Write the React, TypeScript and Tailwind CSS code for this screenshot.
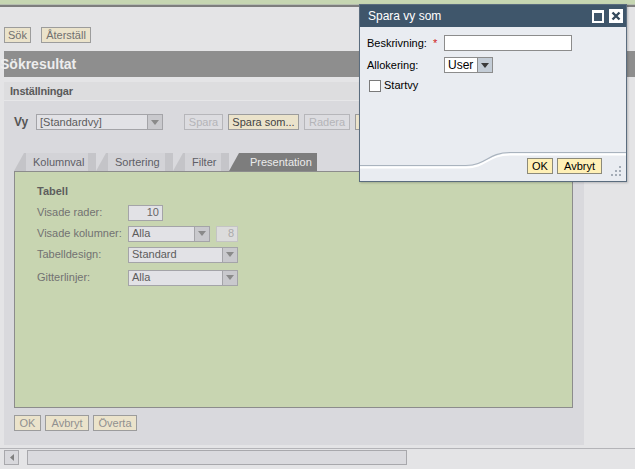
import React from "react";

type BtnProps = { label: string; w: number; kind?: "on" | "off" | "dlg"; className?: string };

const Btn = ({ label, w, kind = "on", className = "" }: BtnProps) => {
  const look =
    kind === "off"
      ? "border-[#b6b6ba] text-[#b4b4b8] bg-[#dcdce0]"
      : kind === "dlg"
      ? "border-[#8c8a7a] text-black bg-[#fff0b6]"
      : "border-[#9c9c9c] text-[#707070] bg-[#ebe3cb]";
  return (
    <div
      style={{ width: w }}
      className={`flex h-[16px] shrink-0 items-center justify-center border ${look} ${className}`}
    >
      {label}
    </div>
  );
};

const Arrow = ({ color = "#8a8a8a" }: { color?: string }) => (
  <svg width="8" height="5" viewBox="0 0 8 5">
    <polygon points="0,0 8,0 4,5" fill={color} />
  </svg>
);

const Select = ({ text, w }: { text: string; w: number }) => (
  <div style={{ width: w }} className="flex h-[16px] border border-[#a4a4a8] bg-[#e2e2e6]">
    <div className="flex flex-1 items-center pl-[3px] text-[#5c5c5c]">{text}</div>
    <div className="flex w-[15px] items-center justify-center border-l border-[#a4a4a8] bg-[#c9c9cd]">
      <Arrow />
    </div>
  </div>
);

const Tab = ({ label, w, active }: { label: string; w: number; active?: boolean }) => (
  <div className="flex h-[18px]">
    <svg width="12" height="18" viewBox="0 0 12 18" className="shrink-0">
      <polygon points="0,18 10,0 12,0 12,18" fill={active ? "#7d7d7d" : "#c4c4c8"} />
    </svg>
    <div
      style={{ width: w }}
      className={`flex items-center ${active ? "bg-[#7d7d7d] pl-[9px] text-[#ececec]" : "bg-[#d3d3d7] pl-[7px] text-[#5e5e66]"}`}
    >
      {label}
    </div>
    {!active && <div className="w-[8px] bg-[#c5c5c9]" />}
  </div>
);

const Row = ({ label, children, mt }: { label: string; children: React.ReactNode; mt: string }) => (
  <div className={`flex h-[16px] items-center ${mt}`}>
    <div className="w-[91px] text-[#727272]">{label}</div>
    {children}
  </div>
);

export default function App() {
  return (
    <div className="relative h-[469px] w-[635px] overflow-hidden bg-[#e4e4e6] font-['Liberation_Sans',Arial,sans-serif] text-[11px]">
      <div className="h-[4px] bg-[#c6d6b2]" />
      <div className="h-[1px] bg-[#b6beb0]" />
      <div className="h-[2px] bg-[#7e7e7e]" />

      {/* search buttons */}
      <div className="flex gap-[10px] pl-[4px] pt-[20px]">
        <Btn label="Sök" w={27} />
        <Btn label="Återställ" w={50} />
      </div>

      <div className="ml-[4px] mt-[8px] flex h-[26px] items-center bg-[#8e8e8e]">
        <span className="-ml-[4px] text-[14px] font-bold text-[#ededed]">Sökresultat</span>
      </div>

      {/* settings panel */}
      <div className="ml-[4px] mt-[5px] flex h-[363px] w-[580px] flex-col bg-[#d9d9dd]">
        <div className="flex h-[19px] items-center border-b border-[#e6e6e8] bg-[#dddddf] pl-[6px] text-[11px] font-bold tracking-[-0.2px] text-[#5a5a5a]">
          Inställningar
        </div>
        <div className="px-[10px]">
          <div className="mt-[13px] flex h-[16px] items-center">
            <div className="w-[22px] text-[12px] font-bold text-[#555]">Vy</div>
            <Select text="[Standardvy]" w={127} />
            <div className="ml-[21px] flex gap-[5px]">
              <Btn label="Spara" w={39} kind="off" />
              <Btn label="Spara som..." w={71} className="!text-[#444]" />
              <Btn label="Radera" w={46} kind="off" />
              <Btn label="Standard" w={60} />
            </div>
          </div>

          <div className="mt-[23px] flex">
            <Tab label="Kolumnval" w={62} />
            <Tab label="Sortering" w={57} />
            <Tab label="Filter" w={36} />
            <Tab label="Presentation" w={76} active />
          </div>

          <div className="h-[237px] w-[559px] border border-[#8c8c8c] bg-[#c8d5b1] pl-[22px] pt-[11px]">
            <div className="text-[11px] font-bold text-[#5e5e5e]">Tabell</div>
            <Row label="Visade rader:" mt="mt-[5px]">
              <div className="flex h-[16px] w-[35px] items-center justify-end border border-[#a4a4a8] bg-[#e2e2e6] pr-[3px] text-[#666]">
                10
              </div>
            </Row>
            <Row label="Visade kolumner:" mt="mt-[5px]">
              <Select text="Alla" w={82} />
              <div className="ml-[6px] flex h-[16px] w-[22px] items-center justify-end border border-[#c4c4c4] bg-[#dcdcdc] pr-[3px] text-[#aaa]">
                8
              </div>
            </Row>
            <Row label="Tabelldesign:" mt="mt-[5px]">
              <Select text="Standard" w={110} />
            </Row>
            <Row label="Gitterlinjer:" mt="mt-[7px]">
              <Select text="Alla" w={110} />
            </Row>
          </div>

          <div className="mt-[7px] flex gap-[4px]">
            <Btn label="OK" w={27} className="!text-[#909090]" />
            <Btn label="Avbryt" w={44} className="!text-[#909090]" />
            <Btn label="Överta" w={44} className="!text-[#909090]" />
          </div>
        </div>
      </div>

      {/* horizontal scrollbar */}
      <div className="mt-[3px] flex h-[21px] gap-[8px] border-t border-[#b4b4b8] pl-[4px] pt-[1px]">
        <div className="flex h-[15px] w-[15px] items-center justify-center border border-[#a8a8ac] bg-[#d8d8dc]">
          <svg width="4" height="7" viewBox="0 0 4 7">
            <polygon points="4,0 4,7 0,3.5" fill="#808080" />
          </svg>
        </div>
        <div className="h-[15px] w-[380px] border border-[#a8a8ac] bg-[#dadade]" />
      </div>

      {/* dialog */}
      <div className="absolute left-[359px] top-[4px] flex h-[178px] w-[268px] flex-col border border-[#5a6c7e] bg-[#e9ecf1] shadow-[1px_1px_2px_rgba(0,0,0,0.2)]">
        <div className="flex h-[22px] shrink-0 items-center bg-[#3f566b] pl-[8px] pr-[3px] text-[12px] text-white">
          <span className="flex-1">Spara vy som</span>
          <div className="mr-[5px] h-[13px] w-[12px] border-2 border-t-[3px] border-white bg-[#3f566b]" />
          <div className="flex h-[14px] w-[14px] items-center justify-center bg-white">
            <svg width="10" height="10" viewBox="0 0 10 10">
              <path d="M1.5 1.5 L8.5 8.5 M8.5 1.5 L1.5 8.5" stroke="#34495c" strokeWidth="2.4" />
            </svg>
          </div>
        </div>

        <div className="pl-[7px] pt-[8px] text-black">
          <div className="flex h-[16px] items-center">
            <div className="w-[77px]">
              Beskrivning: <span className="ml-[3px] text-[#d02020]">*</span>
            </div>
            <div className="h-[16px] w-[128px] border border-[#8c8c8c] bg-white" />
          </div>
          <div className="mt-[6px] flex h-[16px] items-center">
            <div className="w-[77px]">Allokering:</div>
            <div className="flex h-[16px] w-[49px] border border-[#8c8c8c] bg-white">
              <div className="flex flex-1 items-center pl-[3px] text-[12px]">User</div>
              <div className="flex w-[15px] items-center justify-center border-l border-[#8c8c8c] bg-[#c3ccd6]">
                <Arrow color="#3a3a3a" />
              </div>
            </div>
          </div>
          <div className="mt-[6px] flex h-[13px] items-center pl-[2px]">
            <div className="h-[12px] w-[12px] border border-[#7a7a7a] bg-white" />
            <span className="ml-[3px]">Startvy</span>
          </div>
        </div>

        <div className="relative mt-auto h-[30px]">
          <svg width="266" height="18" viewBox="0 0 266 18" className="absolute left-0 top-0">
            <path d="M0 16.5 H106 C126 16.5 128 3.5 150 3.5 H266" fill="none" stroke="#ffffff" strokeWidth="2" />
            <path d="M0 14.5 H106 C126 14.5 128 1.5 150 1.5 H266" fill="none" stroke="#a9b3be" strokeWidth="1.2" />
          </svg>
          <div className="absolute right-[24px] top-[7px] flex gap-[4px]">
            <Btn label="OK" w={26} kind="dlg" />
            <Btn label="Avbryt" w={45} kind="dlg" />
          </div>
          <svg width="14" height="14" viewBox="0 0 14 14" className="absolute bottom-[2px] right-[3px]">
            {[
              [10, 1],
              [6, 5],
              [10, 5],
              [2, 9],
              [6, 9],
              [10, 9],
            ].map(([x, y], i) => (
              <rect key={i} x={x} y={y} width="2" height="2" fill="#a4acb6" />
            ))}
          </svg>
        </div>
      </div>
    </div>
  );
}
